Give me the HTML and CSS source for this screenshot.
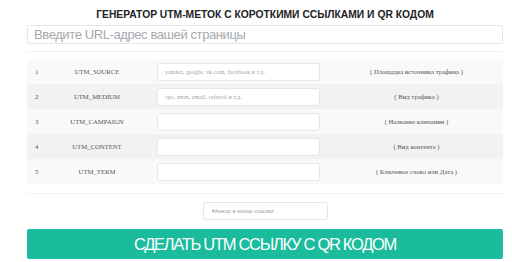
FILE: index.html
```html
<!DOCTYPE html>
<html lang="ru">
<head>
    <meta charset="UTF-8">
    <meta name="viewport" content="width=device-width, initial-scale=1.0">
    <title>Генератор UTM-меток</title>
    <link rel="stylesheet" href="styles.css">
</head>
<body>
    <div class="wrapper">
        <h1 class="title">ГЕНЕРАТОР UTM-МЕТОК С КОРОТКИМИ ССЫЛКАМИ И QR КОДОМ</h1>
        <input type="text" class="url-input" placeholder="Введите URL-адрес вашей страницы">
        <hr class="divider divider-top">
        <table class="utm-table">
            <colgroup>
                <col class="col-num">
                <col class="col-name">
                <col class="col-field">
                <col>
            </colgroup>
            <tr>
                <td class="num">1</td>
                <td class="name">UTM_SOURCE</td>
                <td class="field"><input type="text" class="utm-input" placeholder="yandex, google, vk.com, facebook и т.д."></td>
                <td class="desc">( Площадка источника трафика )</td>
            </tr>
            <tr>
                <td class="num">2</td>
                <td class="name">UTM_MEDIUM</td>
                <td class="field"><input type="text" class="utm-input" placeholder="cpc, smm, email, referral и т.д."></td>
                <td class="desc">( Вид трафика )</td>
            </tr>
            <tr>
                <td class="num">3</td>
                <td class="name">UTM_CAMPAIGN</td>
                <td class="field"><input type="text" class="utm-input"></td>
                <td class="desc">( Название кампании )</td>
            </tr>
            <tr>
                <td class="num">4</td>
                <td class="name">UTM_CONTENT</td>
                <td class="field"><input type="text" class="utm-input"></td>
                <td class="desc">( Вид контента )</td>
            </tr>
            <tr>
                <td class="num">5</td>
                <td class="name">UTM_TERM</td>
                <td class="field"><input type="text" class="utm-input"></td>
                <td class="desc">( Ключевое слово или Дата )</td>
            </tr>
        </table>
        <hr class="divider divider-bottom">
        <div class="anchor-row">
            <input type="text" class="anchor-input" placeholder="#Анкор в конце ссылки">
        </div>
        <button class="make-button">СДЕЛАТЬ UTM ССЫЛКУ С QR КОДОМ</button>
    </div>
</body>
</html>
```

FILE: styles.css
```css
body {
    margin: 0;
    background-color: #ffffff;
    font-family: "Liberation Serif", serif;
    overflow: hidden;
}
.wrapper {
    margin: 0 9px 0 27px;
    display: flex;
    flex-direction: column;
}
.title {
    margin: 9px 0 4px;
    font-family: "Liberation Sans", Arial, sans-serif;
    font-size: 10.3px;
    line-height: 12px;
    font-weight: bold;
    text-align: center;
    color: #222222;
}
.url-input {
    box-sizing: border-box;
    height: 19px;
    margin: 0;
    padding: 0 6px;
    border: 1px solid #e3e7ec;
    border-radius: 2px;
    font-family: "Liberation Sans", sans-serif;
    font-size: 13px;
    letter-spacing: -0.4px;
    color: #333333;
}
.url-input::placeholder {
    color: #a5a9ae;
}
.divider {
    width: 100%;
    border: none;
    border-top: 1px solid #f1f2f4;
}
.divider-top {
    margin: 7px 0 7px;
}
.divider-bottom {
    margin: 9px 0 8px;
}
.utm-table {
    width: 100%;
    table-layout: fixed;
    border-collapse: collapse;
    font-size: 6.7px;
    color: #555555;
}
.col-num {
    width: 28px;
}
.col-name {
    width: 84px;
}
.col-field {
    width: 191px;
}
.utm-table tr {
    height: 25px;
}
.utm-table td {
    padding: 0;
}
.utm-table tr:nth-child(odd) {
    background-color: #f9f9f9;
}
.utm-table tr:nth-child(even) {
    background-color: #f2f2f2;
}
.utm-table .num {
    padding-left: 8px;
}
.name {
    text-align: center;
}
.utm-table .field {
    padding-left: 18px;
}
.desc {
    text-align: center;
}
.utm-input {
    box-sizing: border-box;
    width: 163px;
    height: 18px;
    display: block;
    padding: 0 7px;
    border: 1px solid #e3e7ec;
    border-radius: 3px;
    background-color: #ffffff;
    font-family: "Liberation Serif", serif;
    font-size: 6.2px;
}
.utm-input::placeholder {
    color: #a8a8a8;
}
.anchor-row {
    display: flex;
    justify-content: center;
    margin-bottom: 9px;
}
.anchor-input {
    box-sizing: border-box;
    width: 125px;
    height: 18px;
    padding: 0 8px;
    border: 1px solid #e3e7ec;
    border-radius: 2px;
    font-family: "Liberation Sans", sans-serif;
    font-size: 5.8px;
}
.anchor-input::placeholder {
    color: #9a9ea3;
}
.make-button {
    height: 30px;
    padding: 0;
    border: none;
    border-radius: 2px;
    background-color: #1abc9c;
    color: #ffffff;
    font-family: "Liberation Sans", sans-serif;
    font-size: 16.5px;
    letter-spacing: -1.3px;
    cursor: pointer;
}
```
